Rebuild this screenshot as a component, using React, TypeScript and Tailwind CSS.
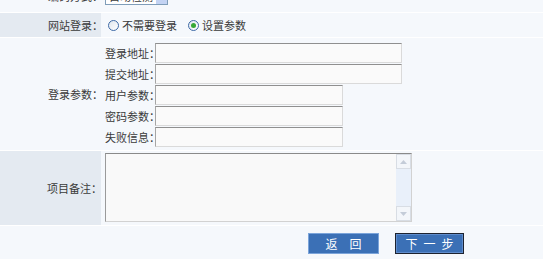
import React from "react";

const labelDark = "bg-[#e4eaf1]";

function Radio({ checked }: { checked?: boolean }) {
  return (
    <span className="relative inline-flex h-[11px] w-[11px] items-center justify-center rounded-full border border-[#3e6aa6] bg-gradient-to-br from-[#dfe6ee] to-white">
      {checked && <span className="h-[5px] w-[5px] rounded-full bg-[#36a836]" />}
    </span>
  );
}

function Field({ label, wide }: { label: string; wide?: boolean }) {
  return (
    <div className="flex h-[21px] items-start">
      <span className="w-[50px] whitespace-nowrap pt-[3px] leading-[14px]">{label}</span>
      <div
        className={`h-[20px] border border-t-[#8f8f8f] border-l-[#a5a5a5] border-r-[#dadada] border-b-[#dadada] bg-[#fafafa] ${
          wide ? "w-[247px]" : "w-[188px]"
        }`}
      />
    </div>
  );
}

export default function App() {
  return (
    <div
      className="h-[259px] w-[543px] overflow-hidden bg-[#f5f8fc] text-[11px] text-[#3a3a3a]"
      style={{ fontFamily: '"Noto Sans CJK SC", "Noto Sans", sans-serif' }}
    >
      <div className="-mt-[19px]">
        {/* 编码方式 */}
        <div className="flex h-[32px] border-b border-white">
          <div className="flex w-[101px] items-center whitespace-nowrap pl-[48px]">编码方式：</div>
          <div className="flex items-center pl-[4px]">
            <div className="flex h-[16px] w-[63px] items-center border border-[#7f9db9] bg-white">
              <span className="flex-1 pl-[3px] leading-none">自动检测</span>
              <span className="flex h-full w-[11px] items-center justify-center bg-[#c3d3f3]">
                <svg width="5" height="3" viewBox="0 0 5 3">
                  <path d="M0 0h5L2.5 3z" fill="#4d6185" />
                </svg>
              </span>
            </div>
          </div>
        </div>

        {/* 网站登录 */}
        <div className="flex h-[25px] border-b border-white">
          <div className={`flex w-[101px] items-center whitespace-nowrap pl-[48px] ${labelDark}`}>网站登录：</div>
          <div className="flex items-center pl-[7px]">
            <label className="flex items-center gap-[3px]">
              <Radio />
              <span>不需要登录</span>
            </label>
            <label className="ml-[11px] flex items-center gap-[3px]">
              <Radio checked />
              <span>设置参数</span>
            </label>
          </div>
        </div>

        {/* 登录参数 */}
        <div className="flex h-[113px] border-b border-white">
          <div className="flex w-[101px] items-center whitespace-nowrap pl-[48px]">登录参数：</div>
          <div className="flex flex-col pl-[4px] pt-[5px]">
            <Field label="登录地址：" wide />
            <Field label="提交地址：" wide />
            <Field label="用户参数：" />
            <Field label="密码参数：" />
            <Field label="失败信息：" />
          </div>
        </div>

        {/* 项目备注 */}
        <div className="flex h-[75px] border-b border-white">
          <div className={`flex w-[101px] items-center whitespace-nowrap pl-[47px] ${labelDark}`}>项目备注：</div>
          <div className="pl-[4px] pt-[2px]">
            <div className="flex h-[69px] w-[307px] border border-t-[#8a8a8a] border-l-[#9a9a9a] border-r-[#d2d2d2] border-b-[#d2d2d2] bg-[#f9f9f9]">
              <div className="flex-1" />
              <div className="flex w-[15px] flex-col justify-between bg-[#e9f0fa]">
                <div className="flex h-[15px] items-center justify-center border border-[#d8dde4] bg-[#f3f6fa]">
                  <svg width="7" height="4" viewBox="0 0 7 4">
                    <path d="M0 4L3.5 0 7 4z" fill="#c4ccd8" />
                  </svg>
                </div>
                <div className="flex h-[15px] items-center justify-center border border-[#d8dde4] bg-[#f3f6fa]">
                  <svg width="7" height="4" viewBox="0 0 7 4">
                    <path d="M0 0h7L3.5 4z" fill="#c4ccd8" />
                  </svg>
                </div>
              </div>
            </div>
          </div>
        </div>
      </div>

      {/* Buttons */}
      <div className="flex gap-[16px] pl-[308px] pt-[7px]">
        <button className="flex h-[21px] w-[71px] items-center justify-center border border-[#7ba4da] bg-[#3b70b6] pl-[12px] text-[12px] tracking-[12px] text-white">
          返回
        </button>
        <button className="flex h-[21px] w-[69px] items-center justify-center border border-[#1d2330] bg-[#3b70b6] pl-[6px] text-[12px] tracking-[6px] text-white shadow-[inset_0_0_0_1px_#5f8ccc]">
          下一步
        </button>
      </div>
    </div>
  );
}
